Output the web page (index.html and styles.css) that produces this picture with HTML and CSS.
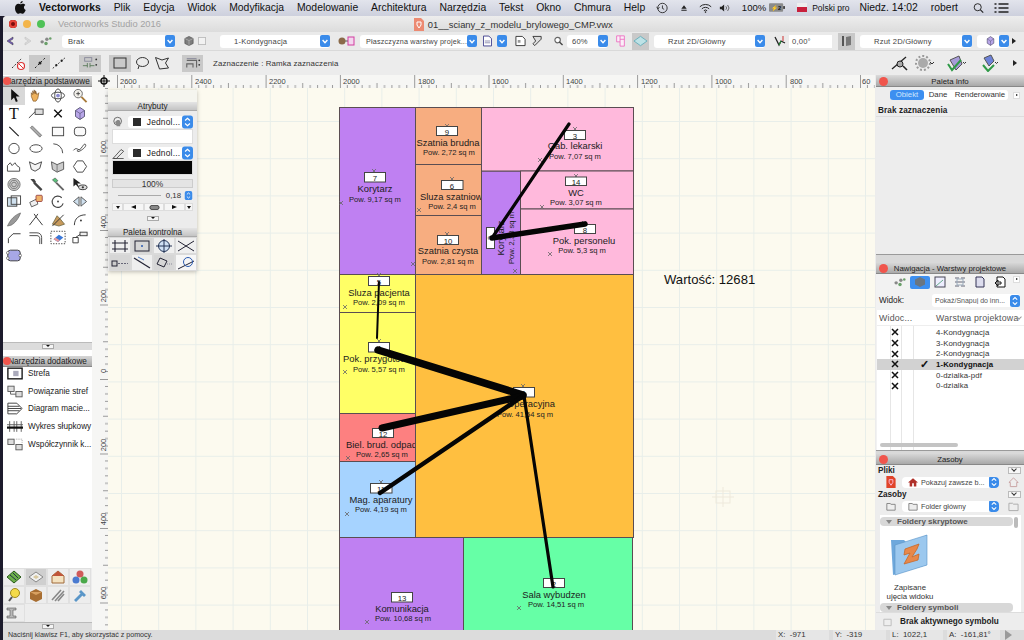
FILE: index.html
```html
<!DOCTYPE html>
<html lang="pl">
<head>
<meta charset="utf-8">
<title>Vectorworks</title>
<link rel="stylesheet" href="styles.css">
</head>
<body>
<svg class="defs" aria-hidden="true">
  <symbol id="st" viewBox="0 0 10 12"><rect width="10" height="12" rx="2.5" fill="#3a8bea"/><path d="M2.8 4.6 5 2.6l2.2 2M2.8 7.4 5 9.4l2.2-2" fill="none" stroke="#fff" stroke-width="1.1"/></symbol>
  <symbol id="dn" viewBox="0 0 10 12"><rect width="10" height="12" rx="2" fill="#3a8bea"/><path d="M2.6 5 5 7.6 7.4 5" fill="none" stroke="#fff" stroke-width="1.4"/></symbol>
  <symbol id="x" viewBox="0 0 8 8"><path d="M1 1l6 6M7 1 1 7" stroke="#111" stroke-width="1.5"/></symbol>
  <symbol id="gem" viewBox="0 0 20 20"><path d="M10 2 16 6v8l-6 4-6-4V6z" fill="#b8a6e8" stroke="#3c3c58"/><path d="M4 6l6 4 6-4M10 10v8" fill="none" stroke="#3c3c58" stroke-width=".7"/></symbol>
</svg>

<header class="menubar">
  <div class="menu-left">
    <svg class="apple" viewBox="0 0 12 14"><path d="M8.400 0c.1 1.400-1.200 2.800-2.600 2.700C5.600 1.400 7 .1 8.400 0zM6 3.500c.9 0 1.500-.6 2.700-.6 1 0 2 .5 2.600 1.400-2.200 1.300-1.900 4.300.4 5.300-.6 1.700-2 4.200-3.500 4.200-.9 0-1.300-.6-2.300-.6s-1.500.6-2.300.6C1.900 13.800 0 10.500 0 7.700 0 5 1.700 3 3.700 3c1 0 1.700.5 2.300.5z" fill="#111"/></svg>
    <b>Vectorworks</b><span>Plik</span><span>Edycja</span><span>Widok</span><span>Modyfikacja</span><span>Modelowanie</span><span>Architektura</span><span>Narzędzia</span><span>Tekst</span><span>Okno</span><span>Chmura</span><span>Help</span>
  </div>
  <div class="menu-right">
    <svg class="mi w14" viewBox="0 0 14 14"><circle cx="7.500" cy="7" r="5.500" fill="none" stroke="#222"/><path d="M7.500 4v3.500l2 1M.5 6l2 2 1.500-2" fill="none" stroke="#222"/></svg>
    <svg class="mi w8 ml11" viewBox="0 0 12 12"><path d="M6 2l4 5H2zM2 8.500h8V10H2z" fill="#222"/></svg>
    <svg class="mi w13 ml11" viewBox="0 0 16 12"><path d="M1 4.500a10 10 0 0 1 14 0M3.500 7a6.500 6.500 0 0 1 9 0M6 9.300a3 3 0 0 1 4 0" fill="none" stroke="#222" stroke-width="1.200"/><circle cx="8" cy="11" r="1" fill="#222"/></svg>
    <svg class="mi w12 ml7" viewBox="0 0 14 12"><path d="M1 4.500h2L6 2v8L3 7.500H1z" fill="#222"/><path d="M8 4a3 3 0 0 1 0 4M10 2.500a5 5 0 0 1 0 7" fill="none" stroke="#555"/></svg>
    <span class="ml11 small">100%</span>
    <svg class="batt" viewBox="0 0 17 9"><rect width="15" height="9" rx="1" fill="#8a8a8a"/><rect x="15" y="3" width="2" height="3" fill="#444"/><text x="2" y="7.200" class="batt-t">⚡2</text></svg>
    <span class="flag ml12"></span>
    <span class="ml5 polski">Polski pro</span>
    <span class="ml10">Niedz. 14:02</span>
    <span class="ml13">robert</span>
    <svg class="mi w11 ml15" viewBox="0 0 14 14"><circle cx="6" cy="6" r="4.500" fill="none" stroke="#222" stroke-width="1.200"/><path d="M9.500 9.500 13 13" stroke="#222" stroke-width="1.400"/></svg>
    <svg class="mi w15 ml10" viewBox="0 0 14 12"><path d="M4 2h10M4 6h10M4 10h10M0 2h2M0 6h2M0 10h2" stroke="#222" stroke-width="1.300"/></svg>
  </div>
</header>

<div class="window">
  <div class="titlebar">
    <i class="light red"></i><i class="light amber"></i><i class="light green"></i>
    <span class="app-title">Vectorworks Studio 2016</span>
    <svg class="docicon" viewBox="0 0 10 13"><path d="M0 0h7l3 3v10H0z" fill="#ec8a72"/><path d="M3 4h4v3l-2 3-2-3z" fill="none" stroke="#fff"/></svg>
    <span class="doc-title">01__sciany_z_modelu_brylowego_CMP.vwx</span>
  </div>

  <div class="toolbar one">
    <svg class="ic w10 ml4" viewBox="0 0 10 12"><path d="M9 2 3 6l6 4V8L5.500 6 9 4z" fill="#7a5ec8" stroke="#333" stroke-width=".5"/></svg>
    <svg class="ic w10 ml10" viewBox="0 0 10 12"><path d="M1 2l6 4-6 4V8l3.500-2L1 4z" fill="#ddd" stroke="#bbb" stroke-width=".5"/></svg>
    <svg class="ic w12 ml6" viewBox="0 0 14 12"><circle cx="2.500" cy="7" r="2" fill="#888"/><circle cx="7" cy="9" r="2" fill="#6aa06a"/><circle cx="8" cy="4" r="2" fill="#888"/><circle cx="12" cy="3" r="1.500" fill="#6aa06a"/></svg>
    <div class="popup w113 ml10"><span>Brak</span><svg class="step"><use href="#dn"/></svg></div>
    <svg class="ic w10 ml9" viewBox="0 0 12 12"><path d="M6 .5 11 3v6l-5 2.500L1 9V3z" fill="#7d7d7d" stroke="#333" stroke-width=".6"/><path d="M1 3l5 2.500L11 3M6 5.500v6" stroke="#ccc" fill="none" stroke-width=".6"/></svg>
    <svg class="ic w8 ml4" viewBox="0 0 9 10"><rect x=".5" y="1" width="8" height="8" fill="#f2f2f2" stroke="#bbb"/></svg>
    <div class="popup w110 ml14"><span class="ind">1-Kondygnacja</span><svg class="step"><use href="#dn"/></svg></div>
    <svg class="ic w17 ml8" viewBox="0 0 17 12"><path d="M1 6h15" stroke="#555"/><circle cx="4" cy="6" r="3.500" fill="#8a6a4a"/><rect x="10" y="2" width="6" height="8" fill="#f3d6ee" stroke="#d23ca0"/></svg>
    <div class="popup w110 ml5"><span class="narrow">Płaszczyzna warstwy projek...</span><svg class="step"><use href="#dn"/></svg></div>
    <svg class="ic w9 ml13" viewBox="0 0 10 12"><path d="M.5.5h6l3 3v8h-9z" fill="#fff" stroke="#3a3a8a"/><path d="M2 6h6M2 8h6" stroke="#88a" /></svg>
    <svg class="step ml5"><use href="#dn"/></svg>
    <svg class="ic w11 ml8" viewBox="0 0 12 12"><path d="M1 1h7l3 3v7H1z" fill="#fff" stroke="#333"/><path d="M3 5h3v3H3z" fill="#999"/></svg>
    <svg class="ic w11 ml6" viewBox="0 0 12 12"><path d="M1 1h9v3L6 8 3 11 1 9l3-3z" fill="#ddd" stroke="#333"/></svg>
    <svg class="ic w9 ml11" viewBox="0 0 10 10"><circle cx="4" cy="4" r="3" fill="#fff" stroke="#666" stroke-width="1.300"/><path d="M6 6l3.500 3.500" stroke="#444" stroke-width="1.500"/></svg>
    <div class="popup w41 ml4"><span class="tight">60%</span><svg class="step"><use href="#dn"/></svg></div>
    <svg class="ic w11 ml7" viewBox="0 0 11 14"><path d="M1 1h9v12H5V8H1zM5 1v7M5 5h5" fill="#fbeef8" stroke="#ec6bc0"/></svg>
    <span class="sel w17 ml6"><svg class="ic w15" viewBox="0 0 16 12"><path d="M8 1l7 5-7 5-7-5z" fill="#bde2e6" stroke="#6ab0bc"/></svg></span>
    <div class="popup w111 ml5"><span class="ind">Rzut 2D/Główny</span><svg class="step"><use href="#dn"/></svg></div>
    <svg class="ic w12 ml9" viewBox="0 0 12 12"><path d="M1 2l4 8 2-4 4 2" fill="none" stroke="#222" stroke-width="1.300"/><path d="M9 1v5" stroke="#c33"/><path d="M5 10l2-4" stroke="#2a8a3a" stroke-width="1.300"/></svg>
    <div class="field w43 ml3">0,00°</div>
    <span class="sel w17 ml6"><svg class="ic w11" viewBox="0 0 11 12"><rect x="1" y="1" width="2" height="10" fill="#555"/><path d="M5 2l5-1v9l-5 1z" fill="#777"/></svg></span>
    <div class="popup w112 ml5"><span class="ind">Rzut 2D/Główny</span><svg class="step"><use href="#dn"/></svg></div>
    <div class="popup w32 ml5"><svg class="ic w11 shield" viewBox="0 0 20 20"><use href="#gem"/></svg><svg class="step"><use href="#dn"/></svg></div>
    <span class="tri ml3"></span>
  </div>

  <div class="toolbar two">
    <svg class="ic big ml10" viewBox="0 0 16 16"><path d="M2 13 12 3" stroke="#333" stroke-dasharray="2 1.500"/><circle cx="11" cy="11" r="3.500" fill="#fff" stroke="#d33" stroke-width="1.200"/><path d="M8.500 8.500l5 5" stroke="#d33"/></svg>
    <span class="sel w21 ml3"><svg class="ic big" viewBox="0 0 16 16"><path d="M3 13 13 3" stroke="#222" stroke-dasharray="2 2"/><circle cx="8" cy="8" r="1.500" fill="#222"/></svg></span>
    <svg class="ic big ml1" viewBox="0 0 18 16"><path d="M2 14 16 2" stroke="#222" stroke-dasharray="2 2"/><circle cx="6" cy="10.500" r="1.300" fill="#222"/><circle cx="12" cy="5.500" r="1.300" fill="#222"/></svg>
    <span class="sel w22 ml12"><svg class="ic big" viewBox="0 0 18 16"><rect x="3" y="2" width="8" height="4" fill="none" stroke="#889"/><path d="M1 11h5M9 11h5M6 8v5M9 8v5" stroke="#5a7a5a"/><circle cx="16" cy="4" r="1" fill="#333"/><circle cx="16" cy="10" r="1" fill="#333"/></svg></span>
    <span class="sel w22 ml8"><svg class="ic big" viewBox="0 0 16 14"><rect x="2" y="2" width="12" height="10" fill="none" stroke="#333"/></svg></span>
    <svg class="ic big ml3" viewBox="0 0 16 14"><ellipse cx="8.500" cy="6" rx="6" ry="4.500" fill="none" stroke="#333"/><path d="M5 10l-1 3" stroke="#333"/></svg>
    <svg class="ic big ml4" viewBox="0 0 16 14"><path d="M1.500 1.500 8 4l6.500-2-3 5 3 5-9 1z" fill="none" stroke="#333"/></svg>
    <span class="sel w21 ml12"><svg class="ic big" viewBox="0 0 18 16"><path d="M2 5h11v8M2 13V9h7v4" fill="none" stroke="#666" stroke-width="1.300"/><path d="M2 3h11" stroke="#889"/><circle cx="16" cy="5" r="1" fill="#333"/><circle cx="16" cy="10" r="1" fill="#333"/></svg></span>
    <span class="hint">Zaznaczenie : Ramka zaznaczenia</span>
    <div class="two-right">
      <svg class="ic big2" viewBox="0 0 20 18"><path d="M3 15 17 3" stroke="#222" stroke-width="1.300"/><circle cx="11" cy="10" r="3" fill="#aaa" stroke="#222"/><path d="M14 12l4 4" stroke="#222" stroke-width="1.600"/></svg>
      <svg class="ic big2 ml6" viewBox="0 0 20 18"><circle cx="8" cy="9" r="5" fill="#aaa"/><circle cx="8" cy="9" r="7" fill="none" stroke="#999" stroke-width="2" stroke-dasharray="2 2"/><path d="M15 8l2 2 2-2" fill="none" stroke="#333"/></svg>
      <svg class="ic big2 ml12" viewBox="0 0 20 18"><path d="M3 6l9-4 3 8-6 6z" fill="#a79bd8" stroke="#555"/><path d="M1 10l4 6 9-10" fill="none" stroke="#2f9a47" stroke-width="2"/><path d="M16 8l1.500 1.500L19 8" fill="none" stroke="#333"/></svg>
      <svg class="ic big2 ml12" viewBox="0 0 20 18"><path d="M5 4l7-3 3 6-5 5z" fill="#6d82d8" stroke="#555"/><path d="M4 11l5 6 6-6" fill="none" stroke="#2f9a47" stroke-width="2"/><path d="M16 8l1.500 1.500L19 8" fill="none" stroke="#333"/></svg>
      <span class="tri ml14"></span>
    </div>
  </div>

  <div class="workspace">
    <aside class="left">
      <section class="pal tools">
        <h3 class="pal-head clipd"><i class="dot"></i>Narzędzia podstawowe</h3>
        <div class="toolgrid">
          <span class="tool on"><svg viewBox="0 0 16 16"><path d="M5 1v12l3-3 2 5 2-1-2-5h4z" fill="#111"/></svg></span>
          <span class="tool"><svg viewBox="0 0 16 16"><path d="M3 9V5l1.500 2V3l1.500 3V2l1.500 4V3L9 7l2-2-1 6-2 3H5z" fill="#eeb25e" stroke="#6a3f10" stroke-width=".6"/></svg></span>
          <span class="tool"><svg viewBox="0 0 16 16"><ellipse cx="8" cy="8" rx="7" ry="3.500" fill="none" stroke="#444"/><ellipse cx="8" cy="8" rx="3.500" ry="7" fill="none" stroke="#444"/><circle cx="8" cy="8" r="2" fill="#8a8ad0"/></svg></span>
          <span class="tool"><svg viewBox="0 0 16 16"><circle cx="6" cy="6" r="4.500" fill="#f2f0ea" stroke="#666"/><path d="M9.500 9.500 15 15" stroke="#a87a3a" stroke-width="2"/><path d="M4 6h4M6 4v4" stroke="#444"/></svg></span>
          <span class="tool"><b class="t-glyph">T</b></span>
          <span class="tool"><svg viewBox="0 0 18 14"><path d="M1 12l7-7" stroke="#333"/><rect x="8" y="2" width="9" height="6" fill="#ddd" stroke="#444"/></svg></span>
          <span class="tool"><svg viewBox="0 0 16 16"><path d="M4 4l8 8M12 4l-8 8" stroke="#111" stroke-width="1.500"/></svg></span>
          <span class="tool"><svg viewBox="0 0 20 20"><use href="#gem"/></svg></span>
          <span class="tool"><svg viewBox="0 0 16 16"><path d="M3 3l10 10" stroke="#222" stroke-width="1.300"/></svg></span>
          <span class="tool"><svg viewBox="0 0 16 16"><path d="M2 4l2-2 10 10-2 2z" fill="#aaa" stroke="#555" stroke-width=".7"/></svg></span>
          <span class="tool"><svg viewBox="0 0 16 16"><rect x="2" y="3.500" width="12" height="9" fill="#fafafa" stroke="#444"/></svg></span>
          <span class="tool"><svg viewBox="0 0 16 16"><rect x="2" y="3.500" width="12" height="9" rx="3" fill="#fafafa" stroke="#444"/></svg></span>
          <span class="tool"><svg viewBox="0 0 16 16"><circle cx="8" cy="8" r="5.500" fill="none" stroke="#444"/></svg></span>
          <span class="tool"><svg viewBox="0 0 16 16"><ellipse cx="8" cy="8" rx="6.500" ry="4" fill="none" stroke="#444"/></svg></span>
          <span class="tool"><svg viewBox="0 0 16 16"><path d="M3 3a10 10 0 0 1 10 10" fill="none" stroke="#444"/></svg></span>
          <span class="tool"><svg viewBox="0 0 16 16"><path d="M1 10c4-5 5 2 8-2s4-6 5-4-4 6-7 7-2-2 0-2" fill="none" stroke="#444"/></svg></span>
          <span class="tool"><svg viewBox="0 0 16 16"><path d="M1 13V7l3-3 2 3 3-3 2 3 3 2v4z" fill="none" stroke="#444"/></svg></span>
          <span class="tool"><svg viewBox="0 0 16 16"><path d="M1 3l6 3 7-3-2 7-5 3-4-2z" fill="#f3f3f3" stroke="#444"/></svg></span>
          <span class="tool"><svg viewBox="0 0 16 16"><path d="M1 3l6 3 7-3v8l-7 3-5-3z" fill="#ccc" stroke="#555"/><path d="M7 6v8" stroke="#777"/></svg></span>
          <span class="tool"><svg viewBox="0 0 16 16"><path d="M5 2h6l4 6-4 6H5L1 8z" fill="none" stroke="#444"/></svg></span>
          <span class="tool"><svg viewBox="0 0 16 16"><circle cx="8" cy="8" r="6.500" fill="#ccc" stroke="#777"/><circle cx="8" cy="8" r="4.500" fill="none" stroke="#777"/><circle cx="8" cy="8" r="2.500" fill="none" stroke="#777"/></svg></span>
          <span class="tool"><svg viewBox="0 0 16 16"><path d="M2 2h4l2 3-2 2z" fill="#444"/><path d="M6 6l8 8" stroke="#444" stroke-width="2.500"/></svg></span>
          <span class="tool"><svg viewBox="0 0 16 16"><path d="M2 3l3-2 3 3-3 2z" fill="#5ac07a" stroke="#333" stroke-width=".5"/><path d="M6 6l8 8" stroke="#666" stroke-width="2"/></svg></span>
          <span class="tool"><svg viewBox="0 0 16 16"><path d="M1 1v9l2.500-2L6 11l1-.5L5 7h4z" fill="#222"/><ellipse cx="11" cy="11" rx="4.500" ry="2.500" fill="#ddd" stroke="#333"/><circle cx="11" cy="11" r="1.200" fill="#333"/></svg></span>
          <span class="tool"><svg viewBox="0 0 16 16"><rect x="1" y="4" width="10" height="9" fill="#cfe0ee" stroke="#444"/><rect x="5" y="2" width="10" height="9" fill="none" stroke="#444"/></svg></span>
          <span class="tool"><svg viewBox="0 0 18 16"><path d="M2 9l8-4 1 6-7 3z" fill="#eee" stroke="#555"/><rect x="9" y="1" width="7" height="7" rx="1" fill="#efb26a" stroke="#944"/></svg></span>
          <span class="tool"><svg viewBox="0 0 16 16"><path d="M12 4a6 6 0 1 0 1.500 6" fill="none" stroke="#444" stroke-width="1.200"/><circle cx="8" cy="8" r="1" fill="#444"/></svg></span>
          <span class="tool"><svg viewBox="0 0 16 16"><path d="M7 3v10L1 8zM9 3v10l6-5z" fill="#cfe0ee" stroke="#555"/></svg></span>
          <span class="tool"><svg viewBox="0 0 16 16"><path d="M1 15c3-7 8-12 14-14-2 6-6 11-10 13z" fill="#999" stroke="#555" stroke-width=".6"/></svg></span>
          <span class="tool"><svg viewBox="0 0 16 16"><path d="M1 14 8 5l7 9M8 5 6 2M8 5l2-3" fill="none" stroke="#333"/></svg></span>
          <span class="tool"><svg viewBox="0 0 16 16"><path d="M2 13l5-9 3 3 5 6-6 2z" fill="#c79a5c" stroke="#553" stroke-width=".7"/><path d="M2 15 14 3" stroke="#333"/></svg></span>
          <span class="tool"><svg viewBox="0 0 16 16"><path d="M2 14C2 7 7 3 14 3" fill="none" stroke="#333"/><circle cx="9" cy="9" r="1" fill="#333"/></svg></span>
          <span class="tool"><svg viewBox="0 0 16 16"><path d="M2 14V9l5-5h8" fill="none" stroke="#333"/></svg></span>
          <span class="tool"><svg viewBox="0 0 16 16"><path d="M1 3h8c3 0 5 2 5 5v7M1 6h8c1.500 0 3 1 3 3v6" fill="none" stroke="#444"/></svg></span>
          <span class="tool"><svg viewBox="0 0 18 16"><rect x="1" y="1" width="16" height="14" fill="none" stroke="#333" stroke-dasharray="1.500 1.500"/><path d="M4 10l6-5 5 3-6 5z" fill="#3a78d8"/><path d="M4 10l5 3 2-2-5-3z" fill="#e79a9a"/></svg></span>
          <span class="tool"><svg viewBox="0 0 18 14"><path d="M1 13V7h6v6zM4 7l6-4" fill="none" stroke="#333"/><rect x="9" y="1" width="8" height="4" fill="#eee" stroke="#333"/></svg></span>
          <span class="tool"><svg viewBox="0 0 18 14"><rect x="2" y="1" width="14" height="12" rx="3" fill="#a7a7e6" stroke="#333"/><circle cx="2" cy="4" r="1.500" fill="#fff" stroke="#333" stroke-width=".6"/><circle cx="2" cy="10" r="1.500" fill="#fff" stroke="#333" stroke-width=".6"/><circle cx="16" cy="7" r="1.500" fill="#fff" stroke="#333" stroke-width=".6"/></svg></span>
        </div>
        <div class="pal-foot"><span class="mini-btn"></span></div>
      </section>
      <section class="pal extras">
        <h3 class="pal-head clipd"><i class="dot"></i>Narzędzia dodatkowe</h3>
        <ul class="extra-list">
          <li><svg viewBox="0 0 18 14"><rect x="1" y="1" width="16" height="12" fill="#fff" stroke="#111" stroke-width="1.500"/><rect x="7" y="4" width="6" height="6" fill="#aab" /></svg>Strefa</li>
          <li><svg viewBox="0 0 18 14"><rect x="1" y="1" width="7" height="6" fill="#ddd" stroke="#555"/><rect x="10" y="7" width="7" height="6" fill="#ddd" stroke="#555"/><path d="M4 7v3h6" fill="none" stroke="#555"/></svg>Powiązanie stref</li>
          <li><svg viewBox="0 0 18 14"><path d="M1 1h10l6 6-6 6H1zM1 4.500h13M1 7h15M1 9.500h13" fill="#fff" stroke="#333"/></svg>Diagram macie...</li>
          <li><svg viewBox="0 0 18 14"><path d="M3 1v12M8 1v12M11 1v12M16 1v12M0 5h18" stroke="#555"/><rect x="0" y="7" width="18" height="2.500" fill="#111"/></svg>Wykres słupkowy</li>
          <li><svg viewBox="0 0 18 14"><rect x="1" y="1" width="7" height="6" fill="#ddd" stroke="#555"/><rect x="10" y="7" width="7" height="6" fill="#ddd" stroke="#555"/><path d="M10 1h7v4" fill="none" stroke="#999" stroke-dasharray="1 1"/></svg>Współczynnik k...</li>
        </ul>
        <div class="sets">
          <span><svg viewBox="0 0 16 14"><path d="M1 7l7-6 7 6-7 6z" fill="#6cb04a" stroke="#2a5a1a"/><path d="M4 5l6 5M7 3l5 5" stroke="#234"/></svg></span>
          <span class="on"><svg viewBox="0 0 16 14"><path d="M1 7l7-5 7 5-7 5z" fill="#f0f0f0" stroke="#888"/><path d="M5 7l3-2 3 2-3 2z" fill="#d8c9a0"/></svg></span>
          <span><svg viewBox="0 0 16 14"><path d="M2 6l6-5 6 5v7H2z" fill="#f4e2c0" stroke="#a06a3a"/><path d="M2 6l6-5 6 5" fill="#c0553a"/></svg></span>
          <span><svg viewBox="0 0 16 14"><circle cx="8" cy="4" r="3.500" fill="#cf5a5a"/><circle cx="4" cy="10" r="3.500" fill="#4a7ad0"/><circle cx="12" cy="10" r="3.500" fill="#4aa84a"/></svg></span>
          <span><svg viewBox="0 0 16 14"><circle cx="9" cy="5" r="4.500" fill="#f4da4a" stroke="#a08a20"/><path d="M3 13l3-4" stroke="#555" stroke-width="2"/></svg></span>
          <span><svg viewBox="0 0 16 14"><path d="M2 4l6-3 6 3v7l-6 3-6-3z" fill="#a86e32"/><path d="M2 4l6 3 6-3" fill="#d8a060"/></svg></span>
          <span><svg viewBox="0 0 16 14"><path d="M2 12 11 2M5 13 14 3M8 13l6-7" stroke="#888" stroke-width="1.600"/></svg></span>
          <span><svg viewBox="0 0 16 14"><path d="M2 12l7-7 2 2-7 7zM9 2l5 5-2 2-5-5z" fill="#5a96c8"/></svg></span>
          <span><svg viewBox="0 0 16 14"><path d="M1 2h9v2H7v6h3v2H1v-2h3V4H1z" fill="#b8b8b8" stroke="#555" stroke-width=".6"/></svg></span>
        </div>
        <div class="pal-foot"><span class="mini-btn"></span></div>
      </section>
    </aside>

    <main class="canvas">
      <svg class="plan" viewBox="92 75 783 555" aria-label="Rzut 2D">
        <defs>
          <pattern id="grid" x="108" y="88" width="37.200" height="37.200" patternUnits="userSpaceOnUse" patternTransform="translate(13 33)">
            <path d="M.5 0v38M0 .5h38" class="gridline"/>
          </pattern>
          <pattern id="rulx" x="117" y="75" width="74.300" height="13" patternUnits="userSpaceOnUse">
            <path d="M.5 0v13M7.400 10v3M14.800 10v3M22.200 10v3M29.700 10v3M37.100 8v5M44.600 10v3M52 10v3M59.400 10v3M66.900 10v3" class="tick"/>
          </pattern>
          <pattern id="ruly" x="100" y="81" width="8" height="74.500" patternUnits="userSpaceOnUse">
            <path d="M0 .5h8M5 7.500h3M5 15h3M5 22.400h3M5 29.800h3M3 37.200h5M5 44.700h3M5 52.200h3M5 59.600h3M5 67h3" class="tick"/>
          </pattern>
        </defs>
        <rect x="108" y="88" width="767" height="542" class="paper"/>
        <rect x="108" y="88" width="767" height="542" fill="url(#grid)"/>

        <rect x="92" y="75" width="783" height="13" class="rulerbg"/>
        <rect x="92" y="88" width="16" height="542" class="rulerbg"/>
        <rect x="117" y="75" width="758" height="13" fill="url(#rulx)"/>
        <rect x="100" y="88" width="8" height="542" fill="url(#ruly)"/>
        <g class="rul-t">
          <text x="120" y="84">2600</text><text x="195" y="84">2400</text><text x="269" y="84">2200</text><text x="343" y="84">2000</text><text x="418" y="84">1800</text><text x="492" y="84">1600</text><text x="566" y="84">1400</text><text x="641" y="84">1200</text><text x="715" y="84">1000</text><text x="790" y="84">800</text><text x="862" y="84">60</text>
          <text transform="translate(106 147) rotate(-90)" text-anchor="middle">600</text>
          <text transform="translate(106 222) rotate(-90)" text-anchor="middle">400</text>
          <text transform="translate(106 296) rotate(-90)" text-anchor="middle">200</text>
          <text transform="translate(106 371) rotate(-90)" text-anchor="middle">0</text>
          <text transform="translate(106 445) rotate(-90)" text-anchor="middle">200</text>
          <text transform="translate(106 519) rotate(-90)" text-anchor="middle">400</text>
          <text transform="translate(106 593) rotate(-90)" text-anchor="middle">600</text>
        </g>
        <g class="cross"><circle cx="104" cy="81" r="3" /><path d="M104 75v12M98 81h12"/></g>

        <g class="rooms">
          <rect x="339.500" y="107.500" width="76" height="167" class="c-purple"/>
          <rect x="415.500" y="107.500" width="66" height="57" class="c-orange"/>
          <rect x="415.500" y="164.500" width="66" height="51" class="c-orange"/>
          <rect x="415.500" y="215.500" width="66" height="59" class="c-orange"/>
          <rect x="339.500" y="274.500" width="76" height="38" class="c-yellow"/>
          <rect x="339.500" y="312.500" width="76" height="101" class="c-yellow"/>
          <rect x="339.500" y="413.500" width="76" height="48" class="c-red"/>
          <rect x="339.500" y="461.500" width="76" height="76" class="c-blue"/>
        </g>
        <g class="names start">
          <text x="343" y="362">Pok. przygotowawczy</text>
          <text x="346" y="448">Biel. brud. odpadów</text>
          <text x="420" y="200">Sluza szatniowa</text>
        </g>
        <g class="rooms">
          <rect x="481.500" y="171" width="39" height="103.500" class="c-purple"/>
          <rect x="481.500" y="107.500" width="152" height="63.500" class="c-pink"/>
          <rect x="520.500" y="171" width="113" height="38" class="c-pink"/>
          <rect x="520.500" y="209" width="113" height="65.500" class="c-pink"/>
          <rect x="415.500" y="274.500" width="218" height="263" class="c-gold"/>
          <rect x="339.500" y="537.500" width="124" height="95" class="c-purple"/>
          <rect x="463.500" y="537.500" width="169" height="95" class="c-green"/>
        </g>

        <g class="marks">
          <path d="M339 201l4 4m0-4-4 4M417 208l4 4m0-4-4 4M411 262l4 4m0-4-4 4M538 158l4 4m0-4-4 4M540 205l4 4m0-4-4 4M548 252l4 4m0-4-4 4M513 269l4 4m0-4-4 4M343 305l4 4m0-4-4 4M343 370l4 4m0-4-4 4M346 456l4 4m0-4-4 4M345 512l4 4m0-4-4 4M365 620l4 4m0-4-4 4M517 606l4 4m0-4-4 4"/>
          <path d="M372 169l4 4m0-4-4 4M445 124l4 4m0-4-4 4M450 177l4 4m0-4-4 4M445 232l4 4m0-4-4 4M573 127l4 4m0-4-4 4M574 174l4 4m0-4-4 4M582 221l4 4m0-4-4 4M377 273l4 4m0-4-4 4M377 339l4 4m0-4-4 4M521 384l4 4m0-4-4 4M379 480l4 4m0-4-4 4"/>
        </g>

        <g class="labels">
          <g><rect x="364.500" y="172.500" width="21" height="9.500"/><text x="375" y="180.500">7</text></g>
          <g><rect x="436.500" y="126.500" width="21" height="9"/><text x="447" y="134.500">9</text></g>
          <g><rect x="441.500" y="180.500" width="21.500" height="9"/><text x="452" y="188.500">6</text></g>
          <g><rect x="437.500" y="235.500" width="21" height="9"/><text x="448" y="243.500">10</text></g>
          <g><rect x="564.500" y="130.500" width="21" height="9"/><text x="575" y="138.500">3</text></g>
          <g><rect x="565.500" y="177" width="21" height="8.500"/><text x="576" y="184.500">14</text></g>
          <g><rect x="574.500" y="224.500" width="21" height="9"/><text x="585" y="232.500">8</text></g>
          <g><rect x="486.500" y="227.500" width="8" height="21"/><text transform="translate(493 238) rotate(-90)">2</text></g>
          <g><rect x="368.500" y="276.500" width="21" height="9"/><text x="379" y="284.500">5</text></g>
          <g><rect x="368.500" y="342.500" width="21" height="9.500"/><text x="379" y="350.500">4</text></g>
          <g><rect x="513.500" y="387.500" width="21" height="9.500"/><text x="524" y="395.500">1</text></g>
          <g><rect x="372.500" y="428.500" width="21" height="9"/><text x="383" y="436.500">12</text></g>
          <g><rect x="370.500" y="483.500" width="21.500" height="9.500"/><text x="381" y="491.500">11</text></g>
          <g><rect x="391.500" y="592.500" width="21" height="9.500"/><text x="402" y="600.500">13</text></g>
          <g><rect x="543.500" y="578.500" width="21" height="9"/><text x="554" y="586.500">2</text></g>
        </g>

        <g class="names">
          <text x="375" y="192">Korytarz</text>
          <text x="448" y="146">Szatnia brudna</text>
          <text x="448" y="254">Szatnia czysta</text>
          <text x="575" y="149">Gab. lekarski</text>
          <text x="576" y="196">WC</text>
          <text x="584" y="244">Pok. personelu</text>
          <text transform="translate(504 238) rotate(-90)">Korytarz</text>
          <text x="379" y="296">Sluza pacjenta</text>
          <text x="381" y="503">Mag. aparatury</text>
          <text x="531" y="407">Operacyjna</text>
          <text x="402" y="612">Komunikacja</text>
          <text x="554" y="598">Sala wybudzen</text>
        </g>
        <g class="areas">
          <text x="375" y="202">Pow. 9,17 sq m</text>
          <text x="449" y="155">Pow. 2,72 sq m</text>
          <text x="452" y="209">Pow. 2,4 sq m</text>
          <text x="448" y="264">Pow. 2,81 sq m</text>
          <text x="575" y="159">Pow. 7,07 sq m</text>
          <text x="576" y="205">Pow. 3,07 sq m</text>
          <text x="582" y="253">Pow. 5,3 sq m</text>
          <text transform="translate(514 238) rotate(-90)">Pow. 2,38 sq m</text>
          <text x="379" y="305">Pow. 2,09 sq m</text>
          <text x="379" y="372">Pow. 5,57 sq m</text>
          <text x="382" y="457">Pow. 2,65 sq m</text>
          <text x="381" y="512">Pow. 4,19 sq m</text>
          <text x="525" y="417">Pow. 41,54 sq m</text>
          <text x="403" y="621">Pow. 10,68 sq m</text>
          <text x="556" y="607">Pow. 14,51 sq m</text>
        </g>

        <text x="664" y="284" class="value">Wartość: 12681</text>
        <g class="snap"><rect x="716" y="491" width="14" height="12"/><path d="M723 487v20M712 497h22"/></g>

        <g class="links">
          <path d="M569 124 492 238" class="w3"/>
          <path d="M585 224 492 238" class="w5"/>
          <path d="M379 282 377 338" class="w2"/>
          <path d="M378 350 523 395" class="w7"/>
          <path d="M382 428 523 396" class="w6"/>
          <path d="M380 493 523 396" class="w4"/>
          <path d="M524 396 553 587" class="w3"/>
        </g>
      </svg>

      <div class="float">
        <div class="float-top"></div>
        <h3 class="pal-head lite">Atrybuty</h3>
        <div class="attrs">
          <div class="attr-row">
            <svg class="attr-ic" viewBox="0 0 14 14"><circle cx="6" cy="6" r="4.500" fill="#eee" stroke="#555"/><path d="M3 7c2-3 5-3 6-1v6H5z" fill="#888"/></svg>
            <div class="attr-pop"><i class="sq"></i>Jednol...<svg class="step tall"><use href="#st"/></svg></div>
          </div>
          <div class="swatch white"></div>
          <div class="attr-row r2">
            <svg class="attr-ic" viewBox="0 0 14 14"><path d="M1 13 10 3l3 2-9 9z" fill="none" stroke="#444"/><path d="M0 13.500h13" stroke="#444"/></svg>
            <div class="attr-pop"><i class="sq"></i>Jednol...<svg class="step tall"><use href="#st"/></svg></div>
          </div>
          <div class="swatch black"></div>
          <div class="opacity">100%</div>
          <div class="thick"><i></i><span>0,18</span><svg class="step"><use href="#st"/></svg></div>
          <div class="arrows">
            <span><b class="dn"></b></span><span><b class="lf"></b></span><span><svg viewBox="0 0 12 6"><rect x=".5" y=".5" width="11" height="5" rx="2.500" fill="#888" stroke="#333"/></svg></span><span><b class="rt"></b></span><span><b class="dn"></b></span>
          </div>
          <div class="attr-foot"><span class="mini-btn"></span></div>
        </div>
        <h3 class="pal-head lite">Paleta kontrolna</h3>
        <div class="ctrl">
          <span><svg viewBox="0 0 18 14"><path d="M4 1v12M14 1v12M1 4h16M1 10h16" stroke="#223" stroke-width="1.100"/></svg></span>
          <span class="on"><svg viewBox="0 0 18 14"><rect x="2" y="2" width="14" height="10" fill="none" stroke="#223"/><circle cx="9" cy="7" r="1" fill="#2a5ab0"/></svg></span>
          <span><svg viewBox="0 0 18 14"><circle cx="9" cy="7" r="5.500" fill="#cfe0f4" stroke="#235"/><path d="M1 7h16M9 0v14" stroke="#235"/></svg></span>
          <span><svg viewBox="0 0 18 14"><path d="M1 2l16 10M1 12 17 2" stroke="#223"/></svg></span>
          <span class="on"><svg viewBox="0 0 18 14"><rect x="1" y="5" width="5" height="5" fill="#ccc" stroke="#223"/><path d="M7 7.500h10" stroke="#667" stroke-dasharray="2 1"/></svg></span>
          <span><svg viewBox="0 0 18 14"><path d="M1 2l16 10" stroke="#223" stroke-width="1.200"/><path d="M5 1l6 3" stroke="#4a78c8"/></svg></span>
          <span class="on"><svg viewBox="0 0 18 14"><path d="M5 2l7 3-3 6-7-3z" fill="none" stroke="#223"/><path d="M12 8h6" stroke="#889" stroke-dasharray="1 1"/></svg></span>
          <span class="lighter"><svg viewBox="0 0 18 14"><path d="M1 13 17 5" stroke="#223"/><circle cx="11" cy="6" r="4.500" fill="none" stroke="#2a5ab0"/></svg></span>
        </div>
      </div>
    </main>

    <aside class="right">
      <section class="rp info">
        <h3 class="pal-head"><i class="dot big"></i>Paleta Info</h3>
        <div class="info-tabs">
          <div class="seg"><span class="act">Obiekt</span><span class="s2">Dane</span><span class="s3">Renderowanie</span></div>
          <span class="nub"></span>
        </div>
        <div class="nosel">Brak zaznaczenia</div>
      </section>
      <section class="rp nav">
        <h3 class="pal-head"><i class="dot big"></i>Nawigacja - Warstwy projektowe</h3>
        <div class="nav-tabs">
          <span><svg viewBox="0 0 14 12"><circle cx="2.500" cy="7" r="2" fill="#888"/><circle cx="7" cy="9" r="2" fill="#6aa06a"/><circle cx="8" cy="4" r="2" fill="#888"/><circle cx="12" cy="3" r="1.500" fill="#6aa06a"/></svg></span>
          <span class="act"><svg viewBox="0 0 12 12"><path d="M6 1l5 2.500v5L6 11 1 8.500v-5z" fill="#6a7682"/></svg></span>
          <span><svg viewBox="0 0 12 12"><rect x="1" y="1" width="10" height="10" fill="#eef" stroke="#445"/><path d="M2 10 9 4" stroke="#6a8"/></svg></span>
          <span><svg viewBox="0 0 12 12"><path d="M1 2h4M7 2h4M1 6h10M1 10h4M7 10h4" stroke="#667"/><rect x="3" y="3" width="6" height="6" fill="none" stroke="#9ab"/></svg></span>
          <span><svg viewBox="0 0 12 12"><path d="M2 1h6l2 2v8H2z" fill="#dde" stroke="#335"/></svg></span>
          <span><svg viewBox="0 0 12 12"><path d="M3 1h6l2 2v8H3zM1 7l3-3v2h3v2H4v2z" fill="#fff" stroke="#111"/></svg></span>
          <i class="nub"></i>
        </div>
        <div class="view-row">
          <label>Widok:</label>
          <div class="popup w90"><span class="grow">Pokaż/Snapuj do inn...</span><svg class="step"><use href="#st"/></svg></div>
        </div>
        <div class="table">
          <div class="thead"><span class="c1">Widoc...</span><span class="c2"></span><span class="c3">Warstwa projektowa</span><i class="sort"></i></div>
          <div class="trow"><span class="c1"><svg class="x"><use href="#x"/></svg></span><span class="c2"></span><span class="c3">4-Kondygnacja</span></div>
          <div class="trow"><span class="c1"><svg class="x"><use href="#x"/></svg></span><span class="c2"></span><span class="c3">3-Kondygnacja</span></div>
          <div class="trow"><span class="c1"><svg class="x"><use href="#x"/></svg></span><span class="c2"></span><span class="c3">2-Kondygnacja</span></div>
          <div class="trow sel-row"><span class="c1"><svg class="x"><use href="#x"/></svg></span><span class="c2">✓</span><span class="c3">1-Kondygnacja</span></div>
          <div class="trow"><span class="c1"><svg class="x"><use href="#x"/></svg></span><span class="c2"></span><span class="c3">0-dzialka-pdf</span></div>
          <div class="trow"><span class="c1"><svg class="x"><use href="#x"/></svg></span><span class="c2"></span><span class="c3">0-dzialka</span></div>
          <div class="hbar"></div>
        </div>
      </section>
      <section class="rp res">
        <h3 class="pal-head"><i class="dot big"></i>Zasoby</h3>
        <div class="res-block">
          <div class="res-title"><b>Pliki</b><span class="chev"></span></div>
          <div class="res-row">
            <svg class="res-ic" viewBox="0 0 10 13"><path d="M0 0h7l3 3v10H0z" fill="#e0442a"/><path d="M3 4h4v3l-2 3-2-3z" fill="none" stroke="#fbd"/></svg>
            <div class="popup grow"><svg class="home" viewBox="0 0 12 11"><path d="M6 1 0 6h2v5h3V7h2v4h3V6h2z" fill="#b0312a"/></svg><span class="grow">Pokazuj zawsze b...</span><svg class="step"><use href="#st"/></svg></div>
            <svg class="res-ic gray" viewBox="0 0 12 11"><path d="M6 1 1 6h1.500v4.500h7V6H11z" fill="#eee" stroke="#c7a0a0"/></svg>
          </div>
          <div class="res-title"><b>Zasoby</b><span class="chev"></span></div>
          <div class="res-row">
            <svg class="res-ic" viewBox="0 0 12 10"><path d="M1 2h4l1 1h5v7H1z" fill="#eee" stroke="#777"/></svg>
            <div class="popup grow"><svg class="home" viewBox="0 0 12 10"><path d="M1 2h4l1 1h5v7H1z" fill="#eee" stroke="#777"/></svg><span class="grow">Folder główny</span><svg class="step"><use href="#st"/></svg></div>
            <svg class="res-ic gray" viewBox="0 0 12 10"><path d="M1 2h4l1 1h5v7H1z" fill="#eee" stroke="#aaa"/></svg>
          </div>
        </div>
        <div class="browser">
          <div class="group"><span class="disc"></span>Foldery skryptowe</div>
          <div class="thumb">
            <svg viewBox="0 0 38 42"><path d="M0 6h13l3 3 20-8v30L2 41z" fill="#6ea8dc"/><path d="M4 11l32-10v30L4 41z" fill="#9cc8ee" stroke="#5a94c8" stroke-width=".6"/><path d="M14 15l14-5-2 5-5 8 7-3-1 6-14 4 6-11-6 2z" fill="#e8884a" stroke="#c8682a" stroke-width=".8"/></svg>
            <span>Zapisane<br>ujęcia widoku</span>
          </div>
          <div class="group cut"><span class="disc"></span>Foldery symboli</div>
          <div class="vbar"></div>
        </div>
        <div class="active-sym"><svg viewBox="0 0 12 12"><path d="M2 3h8v7H2z" fill="#eee" stroke="#bbb"/></svg><b>Brak aktywnego symbolu</b></div>
      </section>
    </aside>
  </div>

  <footer class="status">
    <span class="status-hint">Naciśnij klawisz F1, aby skorzystać z pomocy.</span>
    <div class="coords">
      <span class="cell">X: &nbsp;-971</span><span class="cell">Y: &nbsp;-319</span><span class="cell">L: &nbsp;1022,1</span><span class="cell">A: &nbsp;-161,81°</span><i class="tri gray"></i>
    </div>
  </footer>
</div>
</body>
</html>
```

FILE: styles.css
```css
* { box-sizing: border-box; }
html, body { margin: 0; padding: 0; }
body {
  width: 1024px; height: 640px; overflow: hidden;
  font-family: "Liberation Sans", Arial, sans-serif;
  color: #111; background: #1c1b2c;
}
.defs { position: absolute; width: 0; height: 0; }
svg { display: block; flex: none; }

/* menu bar */
.menubar {
  height: 16px; display: flex; justify-content: space-between; align-items: center; white-space: nowrap;
  background: linear-gradient(#e2e4ec, #cdd0dd); font-size: 10.4px; padding: 0 0 1px 15px;
}
.menu-left, .menu-right { display: flex; align-items: center; }
.menu-left > span { margin-left: 12.9px; }
.menu-left > b { margin-left: 13px; font-size: 10.4px; }
.apple { width: 11px; height: 13px; }
.menu-right { padding-right: 15px; }
.mi { height: 12px; }
.small { font-size: 9.5px; }
.polski { font-size: 8.5px; }
.batt { width: 16px; height: 9px; margin-left: 3px; }
.batt-t { font-size: 6px; font-weight: 700; fill: #111; }
.flag { width: 10px; height: 9px; background: linear-gradient(#eee 50%, #c8203c 50%); }
.ml1 { margin-left: 1px; } .ml3 { margin-left: 3px; } .ml4 { margin-left: 4px; } .ml5 { margin-left: 5px; }
.ml6 { margin-left: 6px; } .ml7 { margin-left: 7px; } .ml8 { margin-left: 8px; } .ml9 { margin-left: 9px; }
.ml10 { margin-left: 10px; } .ml11 { margin-left: 11px; } .ml12 { margin-left: 12px; } .ml13 { margin-left: 13px; } .ml14 { margin-left: 14px; } .ml15 { margin-left: 15px; }

/* window */
.window {
  margin-left: 3px; height: 624px; display: flex; flex-direction: column;
  background: #ececec; border-radius: 4px 0 0 0; overflow: hidden;
}
.titlebar {
  height: 16px; flex: none; display: flex; align-items: center;
  background: linear-gradient(#ededed, #dcdcdc); padding-left: 6px; font-size: 10px; position: relative;
}
.light { width: 8px; height: 8px; border-radius: 50%; margin-right: 6px; }
.red { background: #e9453a; box-shadow: inset 0 0 0 2px #e9453a, inset 0 0 0 4px #7c0d0d; }
.amber { background: #f3b54a; }
.green { background: #4fc257; }
.app-title { color: #a3a3a3; margin-left: 7px; font-size: 9.3px; }
.docicon { width: 10px; height: 13px; margin-left: 253px; }
.doc-title { margin-left: 4px; color: #333; font-size: 9.4px; }

.toolbar { display: flex; align-items: center; flex: none; white-space: nowrap; }
.toolbar.one { height: 19px; background: #eaeaea; border-bottom: 1px solid #d9d9d9; margin-left: -3px; padding-left: 0; }
.toolbar.two { height: 24px; background: #ececec; margin-left: -3px; font-size: 8px; }
.ic { height: 12px; }
.w8 { width: 8px; } .w9 { width: 9px; } .w10 { width: 10px; } .w11 { width: 11px; } .w12 { width: 12px; } .w13 { width: 13px; } .w14 { width: 14px; } .w15 { width: 15px; } .w17 { width: 17px; }
.w21 { width: 21px; } .w22 { width: 22px; } .w32 { width: 32px; } .w41 { width: 41px; } .w43 { width: 43px; } .w90 { width: 88px; }
.w110 { width: 110px; } .w111 { width: 111px; } .w112 { width: 112px; } .w113 { width: 113px; }
.popup {
  height: 13px; display: flex; align-items: center; justify-content: space-between; white-space: nowrap;
  background: #fff; border-radius: 3px; font-size: 7.6px; color: #444; padding-left: 6px; letter-spacing: .2px;
}
.popup .step { margin-right: 0; }
.popup .ind { margin-left: 8px; }
.popup .narrow { font-size: 7.200px; }
.popup .tight { margin-left: -1px; }
.popup .shield { margin-left: 2px; }
.step { width: 10px; height: 12px; }
.step.tall { height: 14px; width: 11px; }
.field { height: 13px; background: #fff; font-size: 7.6px; color: #444; padding: 2px 3px; letter-spacing: .2px; }
.sel { display: flex; align-items: center; justify-content: center; align-self: center; height: 17px; background: #c9c9c9; flex: none; }
.tri { display: block; width: 0; height: 0; border: 3px solid transparent; border-left: 4px solid #222; border-right: 0; }
.tri.gray { border-left-color: #9a9a9a; border-width: 5px 0 5px 7px; margin-left: 5px; }
.big { width: 16px; height: 16px; }
.big2 { width: 20px; height: 18px; }
.hint { margin-left: 10px; color: #333; letter-spacing: .1px; font-size: 7.9px; }
.two-right { margin-left: auto; display: flex; align-items: center; padding-right: 7px; }

/* workspace */
.workspace { flex: 1; display: flex; min-height: 0; }
.left { width: 89px; flex: none; display: flex; flex-direction: column; background: #fff; }
.pal-head {
  margin: 0; height: 11px; line-height: 11px; text-align: center; font-size: 8.2px; font-weight: 400; color: #222;
  background: linear-gradient(#d6d6d6, #a9a9a9); position: relative; border-bottom: 1px solid #888; white-space: nowrap;
}
.pal-head.clipd { overflow: hidden; margin-top: 1px; }
.dot { position: absolute; left: 0; top: 1px; width: 8px; height: 8px; border-radius: 50%; background: #f0554c; }
.dot.big { width: 9px; height: 9px; left: 3px; top: 1px; }
.toolgrid { display: grid; grid-template-columns: repeat(4, 22px); grid-auto-rows: 17.7px; height: 255px; }
.tool { display: flex; align-items: center; justify-content: center; }
.tool svg { width: 16px; height: 15px; }
.tool.on { background: #d8d8d8; }
.t-glyph { font: 400 16px "Liberation Serif", serif; line-height: 1; }
.pal-foot { height: 8px; background: #dcdcdc; display: flex; justify-content: center; align-items: center; border-top: 1px solid #bbb; flex: none; }
.mini-btn { display: block; width: 12px; height: 5px; background: #f4f4f4; border: 1px solid #aaa; position: relative; }
.mini-btn::after { content: ""; position: absolute; left: 3px; top: 0; border: 2px solid transparent; border-top: 2px solid #111; }
.tools { flex: none; }
.extras { flex: 1; display: flex; flex-direction: column; margin-top: 5px; min-height: 0; }
.extra-list { list-style: none; margin: -2px 0 0; padding: 0; flex: 1; }
.extra-list li { height: 17.600px; display: flex; align-items: center; font-size: 8.2px; color: #222; gap: 5px; padding-left: 4px; white-space: nowrap; }
.extra-list svg { width: 16px; height: 13px; }
.sets { display: grid; grid-template-columns: repeat(4, 22px); grid-auto-rows: 18px; background: #ededed; height: 54px; flex: none; }
.sets span { display: flex; align-items: center; justify-content: center; border: 1px solid #e0e0e0; }
.sets span.on { background: #cfcfcf; }
.sets svg { width: 16px; height: 14px; }

/* canvas */
.canvas { width: 784px; flex: none; position: relative; }
.plan { width: 783px; height: 555px; }
.paper { fill: #fcfaef; }
.gridline { stroke: #e8eeea; fill: none; }
.rulerbg { fill: #f6f6f4; }
.tick { stroke: #9a9a9a; fill: none; stroke-width: 1; }
.rul-t { font-size: 7.500px; fill: #444; }
.cross circle { fill: none; stroke: #111; stroke-width: 1.500; }
.cross path { stroke: #111; }
.rooms rect { stroke: #5a4d52; stroke-width: 1; }
.c-purple { fill: #bf80f2; }
.c-orange { fill: #f7ad80; }
.c-pink { fill: #ffb9dc; }
.c-yellow { fill: #ffff66; }
.c-red { fill: #fd8080; }
.c-blue { fill: #a6d3ff; }
.c-gold { fill: #ffbf40; }
.c-green { fill: #66ffa6; }
.marks path { stroke: #666; fill: none; stroke-width: .8; }
.labels rect { fill: #fff; stroke: #444; }
.labels text { font-size: 7.800px; text-anchor: middle; fill: #222; }
.names text { font-size: 9.400px; text-anchor: middle; fill: #1c1c1c; }
.names.start text { text-anchor: start; }
.areas text { font-size: 7.600px; text-anchor: middle; fill: #222; }
.value { font-size: 13.100px; fill: #111; }
.snap rect, .snap path { fill: none; stroke: #eee9dc; }
.links path { stroke: #050505; fill: none; stroke-linecap: round; }
.w2 { stroke-width: 2px; } .w3 { stroke-width: 3.200px; } .w4 { stroke-width: 4.500px; } .w5 { stroke-width: 5.500px; } .w6 { stroke-width: 7px; } .w7 { stroke-width: 7.500px; }

/* floating attribute palette */
.float { position: absolute; left: 16px; top: 15px; width: 89px; box-shadow: 0 1px 4px rgba(0,0,0,.25); }
.float-top { height: 12px; background: #f5f5ef; }
.pal-head.lite { background: linear-gradient(#e4e4e4, #c4c4c4); height: 9px; line-height: 9px; font-size: 8.2px; border-bottom: 1px solid #aaa; }
.attrs { background: #ececec; height: 117px; padding: 5px 4px 0; }
.attr-row { display: flex; align-items: center; height: 12px; }
.attr-row.r2 { margin-top: 3px; }
.attr-ic { width: 13px; height: 12px; }
.attr-pop { flex: 1; margin-left: 3px; display: flex; align-items: center; height: 12px; background: #fff; border-radius: 3px; font-size: 8.400px; color: #222; letter-spacing: .2px; justify-content: space-between; padding-left: 5px; }
.sq { display: block; width: 8px; height: 8px; background: #2c2c2c; margin-right: 4px; }
.swatch { height: 15px; margin-top: 1px; border: 1px solid #ddd; }
.swatch.white { background: #fff; margin-top: 1px; height: 15px; }
.swatch.black { background: #050505; height: 15px; }
.opacity { height: 9px; line-height: 9px; margin-top: 4px; background: #e4e4e4; border: 1px solid #ccc; text-align: center; font-size: 8.400px; color: #333; }
.thick { display: flex; align-items: center; height: 10px; margin-top: 2px; font-size: 7.800px; color: #333; }
.thick i { flex: 1; height: 1px; background: #aaa; margin: 0 5px 0 6px; }
.thick .step { width: 9px; height: 9px; margin-left: 3px; }
.arrows { display: grid; grid-template-columns: 11px 21px 20px 21px 8px; height: 8px; margin-top: 3px; gap: 0; }
.arrows span { display: flex; align-items: center; justify-content: center; background: #f6f6f6; border: 1px solid #ddd; }
.arrows svg { width: 11px; height: 5px; }
.arrows b { width: 0; height: 0; border: 2.500px solid transparent; display: block; }
.arrows .dn { border-top: 3px solid #111; border-bottom: 0; }
.arrows .lf { border-right: 5px solid #111; border-left: 0; }
.arrows .rt { border-left: 5px solid #111; border-right: 0; }
.attr-foot { display: flex; justify-content: center; margin-top: 5px; }
.ctrl { display: grid; grid-template-columns: repeat(4, 22px); grid-auto-rows: 17px; background: #e8e8e8; padding-left: 1px; }
.ctrl span { display: flex; align-items: center; justify-content: center; border: 1px solid #dadada; background: #efefef; }
.ctrl span.on { background: #d6d6d6; }
.ctrl span.lighter { background: #f6f6f6; }
.ctrl svg { width: 18px; height: 14px; }

/* right column */
.right { flex: 1; display: flex; flex-direction: column; background: #d9d9d9; min-width: 0; padding-top: 1px; }
.rp { background: #ededed; border-bottom: 1px solid #9a9a9a; display: flex; flex-direction: column; }
.info { height: 179px; flex: none; }
.nav { height: 188px; flex: none; margin-top: 8px; background: #f2f2f2; }
.res { flex: 1; margin-top: 3px; border-bottom: 0; min-height: 0; }
.rp .pal-head { font-size: 7.800px; height: 11px; }
.info-tabs { display: flex; align-items: center; padding: 3px 4px 0 14px; position: relative; }
.seg { display: flex; width: 118px; height: 10px; background: #fff; border-radius: 3px; font-size: 7.800px; align-items: center; color: #333; }
.seg span { text-align: center; line-height: 10px; }
.seg .act { width: 34px; background: #3d8ff0; color: #cfe6ff; border-radius: 3px; }
.seg .s2 { width: 28px; }
.seg .s3 { flex: 1; }
.nub { display: block; width: 7px; height: 7px; background: #fff; border: 1px solid #ddd; position: relative; margin-left: auto; }
.nub::after { content: ""; position: absolute; left: 2px; top: 1px; border: 1.500px solid transparent; border-left: 2px solid #111; border-right: 0; }
.nosel { font-size: 8.200px; font-weight: 700; padding: 6px 2px 1px; border-bottom: 1px solid #ddd; color: #222; letter-spacing: .1px; }
.nav-tabs { display: flex; align-items: center; height: 16px; margin-top: 0; padding-left: 14px; position: relative; }
.nav-tabs span { width: 20px; height: 13px; display: flex; align-items: center; justify-content: center; }
.nav-tabs span.act { background: #3d8ff0; border-radius: 2px; }
.nav-tabs svg { width: 12px; height: 12px; }
.nav-tabs .nub { margin: -5px 4px 0 auto; }
.view-row { display: flex; align-items: center; height: 15px; margin-top: 3px; padding-left: 3px; font-size: 8.200px; color: #222; }
.view-row label { width: 53px; }
.view-row .popup { color: #555; font-size: 7px; letter-spacing: 0; padding-left: 3px; }
.grow { flex: 1; min-width: 0; white-space: nowrap; overflow: hidden; }
.table { flex: 1; background: #fff; display: flex; flex-direction: column; margin: 2px 0 0 1px; position: relative; background-image: linear-gradient(#e6e6e6, #e6e6e6), linear-gradient(#e6e6e6, #e6e6e6), linear-gradient(#e6e6e6, #e6e6e6); background-size: 1px 100%; background-position: 13px 0, 24px 0, 36px 0; background-repeat: no-repeat; }
.thead { height: 16px; flex: none; display: flex; align-items: center; background: #fff; font-size: 8.800px; color: #555; border-bottom: 1px solid #eee; position: relative; margin-bottom: 1px; letter-spacing: .2px; }
.thead .c3 { font-size: 8.800px; }
.sort { width: 4px; height: 4px; border-right: 1px solid #999; border-bottom: 1px solid #999; transform: rotate(45deg); position: absolute; right: 3px; top: 5px; }
.c1 { width: 36px; padding-left: 2px; flex: none; display: flex; }
.c2 { width: 23px; flex: none; text-align: center; font-size: 11px; line-height: 11px; }
.c3 { flex: 1; white-space: nowrap; }
.trow { height: 10.700px; flex: none; display: flex; align-items: center; font-size: 7.800px; color: #333; letter-spacing: .1px; position: relative; }
.x { width: 8px; height: 8px; margin-left: 12px; }
.sel-row { background: #d2d2d2; font-weight: 700; color: #111; }
.hbar { position: absolute; left: 3px; bottom: 3px; width: 78px; height: 4px; border-radius: 2px; background: #c4c4c4; }

.res-block { padding: 0 2px 0 2px; flex: none; }
.res-title { display: flex; justify-content: space-between; align-items: center; font-size: 8.200px; height: 9px; margin-top: 1px; color: #222; padding-right: 1px; }
.chev { display: block; width: 13px; height: 7px; background: #f7f7f7; border: 1px solid #bbb; position: relative; }
.chev::after { content: ""; position: absolute; left: 3px; top: -1px; width: 3px; height: 3px; border-right: 1px solid #333; border-bottom: 1px solid #333; transform: rotate(45deg); }
.res-row { display: flex; align-items: center; height: 14px; }
.res-ic { width: 10px; height: 12px; margin-left: 8px; flex: none; }
.res-row .popup { margin-left: 6px; height: 11px; border-radius: 4px; font-size: 7.200px; padding-left: 6px; color: #444; letter-spacing: 0; }
.res-ic.gray { margin: 0 3px 0 9px; width: 11px; }
.home { width: 10px; height: 10px; margin-right: 3px; }
.browser { margin: 2px 3px 0 4px; background: #fff; height: 97px; position: relative; overflow: hidden; flex: none; }
.group { height: 9px; margin-right: 8px; background: #d8d8d8; border-radius: 4px; font-size: 8px; font-weight: 700; color: #555; line-height: 9px; padding-left: 6px; display: flex; align-items: center; margin-top: 2px; }
.group.cut { position: absolute; left: 0; right: 0; top: 88px; margin-top: 0; }
.disc { width: 0; height: 0; border: 3px solid transparent; border-top: 4px solid #888; border-bottom: 0; margin-right: 5px; }
.thumb { width: 58px; display: flex; flex-direction: column; align-items: center; font-size: 7.800px; line-height: 9px; text-align: center; color: #333; padding-top: 8px; margin-left: 1px; }
.thumb svg { width: 38px; height: 42px; margin-bottom: 7px; }
.vbar { position: absolute; right: 3px; top: 2px; width: 4px; height: 11px; background: #bbb; border-radius: 2px; }
.active-sym { display: flex; align-items: center; font-size: 8.200px; height: 18px; gap: 7px; padding-left: 6px; color: #222; border-top: 1px solid #ddd; margin-top: auto; flex: none; }
.active-sym svg { width: 11px; height: 12px; }

/* status */
.status { height: 10px; flex: none; display: flex; justify-content: space-between; align-items: center; background: #dcdcdc; font-size: 7.100px; color: #333; padding-left: 5px; }
.coords { display: flex; align-items: center; padding-right: 12px; font-size: 7.900px; }
.cell { width: 53px; height: 10px; line-height: 10px; background: #e6e6e6; margin-left: 4px; padding-left: 2px; white-space: nowrap; }
```
